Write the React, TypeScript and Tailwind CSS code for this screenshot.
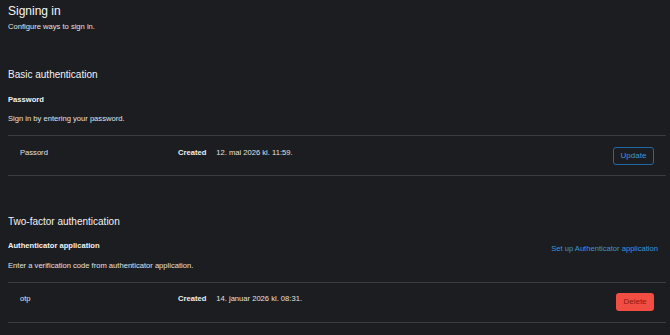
import { ReactNode } from 'react';

// Innlogging-oppsett: én seksjon per autentiseringstype, hver med en rad per legitimasjon.
type Credential = {
  label: string;
  created: string;
  action: 'update' | 'delete';
};

function CredentialRow({ item }: { item: Credential }) {
  const top = item.action === 'update' ? 'pt-[12px]' : 'pt-[11px]';
  return (
    <div className="flex h-[40px] items-start border-t border-[#3a3c40] pr-3">
      <div className={`w-[170px] shrink-0 pl-3 leading-[10px] ${top}`}>{item.label}</div>
      <div className={`flex flex-1 gap-[10px] leading-[10px] ${top}`}>
        <span className="font-bold text-[#efefef]">Created</span>
        <span>{item.created}</span>
      </div>
      {item.action === 'update' ? (
        <button className="mt-[11px] h-[18px] w-[41px] rounded-[3px] border border-[#1f6aa5] text-[8px] text-[#3f96d9]">
          Update
        </button>
      ) : (
        <button className="mt-[10px] h-[18px] w-[38px] rounded-[3px] bg-[#f14d42] text-[8px] text-[#8a1c14]">
          Delete
        </button>
      )}
    </div>
  );
}

function Section({
  title,
  label,
  hint,
  link,
  items,
  gap,
  labelGap,
  hintGap,
}: {
  title: string;
  label: string;
  hint: string;
  link?: ReactNode;
  items: Credential[];
  gap: string;
  labelGap: string;
  hintGap: string;
}) {
  return (
    <section className={gap}>
      <h2 className="text-[10px] leading-[14px] text-[#f2f2f2]">{title}</h2>
      <div className={`flex h-[10px] items-start justify-between pr-2 ${labelGap}`}>
        <h3 className="font-bold leading-[10px] text-[#f2f2f2]">{label}</h3>
        {link}
      </div>
      <p className={`leading-[10px] ${hintGap}`}>{hint}</p>
      <div className="mt-[11px]">
        {items.map((it) => (
          <CredentialRow key={it.label} item={it} />
        ))}
        <div className="border-t border-[#3a3c40]" />
      </div>
    </section>
  );
}

export default function App() {
  return (
    <div
      className="min-h-screen bg-[#1b1d21] pl-2 pr-1 pt-[3px] text-[7.6px] text-[#e2e2e3]"
      style={{ fontFamily: '"Liberation Sans", Arial, sans-serif' }}
    >
      <h1 className="text-[12px] leading-[16px] text-[#f6f6f6]">Signing in</h1>
      <p className="mt-[3px] leading-[10px]">Configure ways to sign in.</p>

      <Section
        gap="mt-[36px]"
        labelGap="mt-[13px]"
        hintGap="mt-[9px]"
        title="Basic authentication"
        label="Password"
        hint="Sign in by entering your password."
        items={[{ label: 'Passord', created: '12. mai 2026 kl. 11:59.', action: 'update' }]}
      />

      <Section
        gap="mt-[39px]"
        labelGap="mt-[12px]"
        hintGap="mt-[10px]"
        title="Two-factor authentication"
        label="Authenticator application"
        hint="Enter a verification code from authenticator application."
        link={
          <a className="mt-[3px] leading-[10px] text-[#3f96d9]" href="#">
            Set up Authenticator application
          </a>
        }
        items={[{ label: 'otp', created: '14. januar 2026 kl. 08:31.', action: 'delete' }]}
      />
    </div>
  );
}
